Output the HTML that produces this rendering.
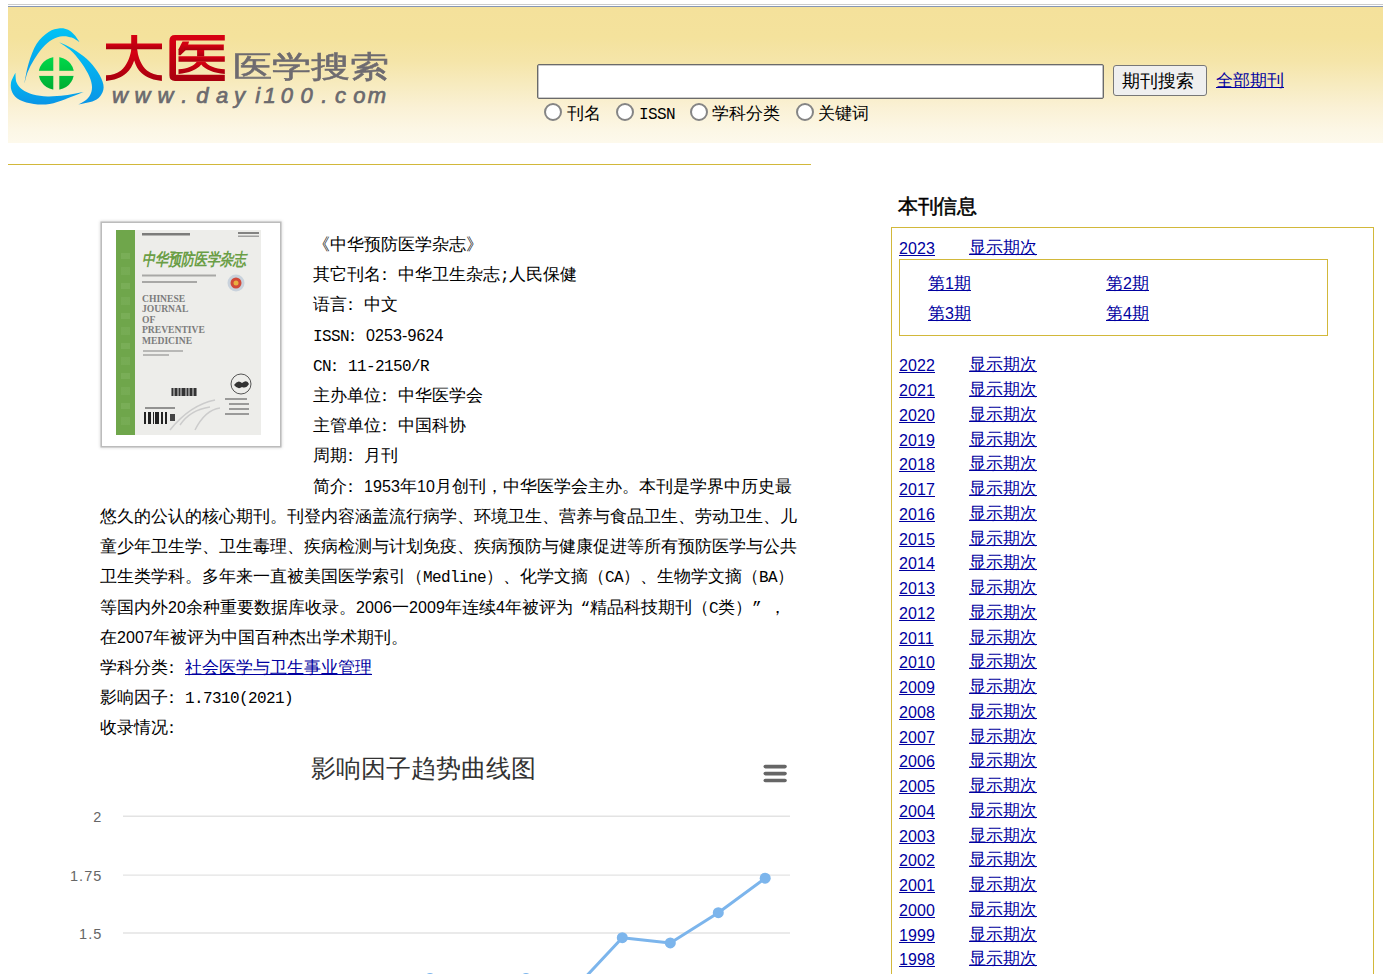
<!DOCTYPE html>
<html><head><meta charset="utf-8">
<style>
html,body{margin:0;padding:0;background:#fff}
body{width:1391px;height:974px;overflow:hidden;position:relative;font-family:"Liberation Mono",monospace;font-size:16px;color:#000}
.a{position:absolute;white-space:nowrap}
.t{font-size:17px;letter-spacing:0px;line-height:20px}
.l{font-size:16px;letter-spacing:-0.6px}
.d{font-family:"Liberation Sans",sans-serif;font-size:16px;letter-spacing:0.1px}
a{color:#0000a0;text-decoration:underline}
i{font-style:normal;display:inline-block;width:1em}
a i{text-decoration:underline}
i.c{text-indent:-.3em}
body.nocjk i{-webkit-text-fill-color:transparent;-webkit-text-stroke:0;position:relative}
body.nocjk i::before{content:"";position:absolute;left:.07em;top:.08em;width:.78em;height:.8em;box-sizing:border-box;border:.065em solid currentColor;opacity:.8}
body.nocjk i::after{content:"";position:absolute;left:.07em;top:.46em;width:.78em;height:.065em;background:currentColor;opacity:.8}
body.nocjk i.p::before{left:.1em;top:.7em;width:.16em;height:.16em;border:0;background:currentColor}
body.nocjk i.p::after{display:none}
body.nocjk a i{box-shadow:inset 0 -2px 0 #fff,inset 0 -3px 0 currentColor}

.fw{display:inline-block;width:17px;font-size:16px;letter-spacing:0}
.yr{position:absolute;white-space:nowrap;font-size:17px;letter-spacing:0px;line-height:20px}
</style></head><body>

<!-- HEADER -->
<div class="a" style="left:8px;top:4px;width:1375px;height:1px;background:#cbcbcb"></div>
<div class="a" style="left:8px;top:6px;width:1375px;height:1px;background:#8595b5"></div>
<div class="a" style="left:8px;top:7px;width:1375px;height:136px;background:linear-gradient(#f4e19b 0%,#f4e29c 22%,#f5e5a9 40%,#f7ebbf 57%,#faf1d5 74%,#fcf7e6 91%,#fdf9ec 100%)"></div>

<!-- logo -->
<svg class="a" style="left:0;top:0" width="400" height="145" viewBox="0 0 400 145">
<defs>
<linearGradient id="bl" x1="0" y1="0" x2="0" y2="1"><stop offset="0" stop-color="#00c3f5"/><stop offset="1" stop-color="#0a94e6"/></linearGradient>
<linearGradient id="gr" x1="0" y1="0" x2="0" y2="1"><stop offset="0" stop-color="#00d84a"/><stop offset="1" stop-color="#00ad32"/></linearGradient>
<linearGradient id="rd" x1="0" y1="0" x2="0" y2="1"><stop offset="0" stop-color="#d80012"/><stop offset="1" stop-color="#a8000e"/></linearGradient>
<mask id="cr"><rect x="0" y="0" width="400" height="145" fill="#fff"/><rect x="53.3" y="50" width="6" height="50" fill="#000"/><rect x="30" y="70.8" width="50" height="5.1" fill="#000"/></mask>
</defs>
<g fill="url(#bl)">
<path d="M24.2,84.2 C24.9,80.7 26.6,70.1 28.6,63.4 C30.7,56.7 33.2,49.2 36.5,44.0 C39.8,38.8 44.7,34.6 48.6,32.0 C52.5,29.4 56.5,28.7 59.8,28.3 C63.0,27.9 65.6,28.7 68.1,29.8 C70.5,30.9 72.6,32.9 74.5,35.0 C76.4,37.1 78.8,41.0 79.6,42.2 L79.6,42.2 C78.3,41.4 74.6,38.6 71.8,37.6 C69.0,36.6 65.7,35.9 62.5,36.2 C59.3,36.5 55.7,37.5 52.4,39.4 C49.1,41.3 45.7,44.3 42.6,47.7 C39.5,51.1 36.5,55.7 34.0,59.7 C31.5,63.7 29.4,67.7 27.8,71.8 C26.2,75.9 24.8,82.1 24.2,84.2Z"/>
<path d="M59.3,42.2 C61.5,43.3 68.2,45.9 72.7,48.7 C77.2,51.5 82.4,54.9 86.6,58.8 C90.8,62.6 94.8,67.5 97.6,71.8 C100.4,76.1 102.8,81.0 103.4,84.7 C104.1,88.4 103.1,91.5 101.5,94.2 C99.9,96.9 97.9,99.1 94.0,100.8 C90.1,102.5 80.8,104.0 78.2,104.6 L78.2,104.6 C79.6,103.8 84.5,101.4 86.6,99.5 C88.7,97.6 90.1,95.5 91.0,93.0 C91.9,90.5 92.3,87.9 91.8,84.7 C91.3,81.5 90.0,77.6 88.0,73.6 C86.0,69.6 82.7,64.5 79.8,60.7 C76.9,56.9 74.2,53.6 70.8,50.5 C67.4,47.4 61.2,43.6 59.3,42.2Z"/>
<path d="M15.4,72.7 C14.7,74.4 11.5,79.5 11.0,82.8 C10.5,86.1 10.8,89.5 12.3,92.4 C13.8,95.3 16.2,98.1 19.8,100.0 C23.4,101.9 28.9,103.3 33.9,104.0 C38.9,104.7 44.4,104.8 49.6,104.0 C54.8,103.2 59.6,101.2 65.3,99.2 C71.0,97.2 80.7,93.3 83.8,92.1 L83.8,92.1 C80.7,92.6 71.3,94.6 65.3,95.3 C59.3,96.0 53.1,96.5 47.7,96.4 C42.3,96.3 37.2,95.6 33.0,94.5 C28.8,93.4 24.9,91.6 22.2,89.6 C19.5,87.6 17.7,85.4 16.6,82.6 C15.5,79.8 15.6,74.3 15.4,72.7Z"/>
</g>
<ellipse cx="56.3" cy="73.3" rx="17.6" ry="16.4" fill="url(#gr)" mask="url(#cr)"/>
<g fill="url(#rd)">
<path d="M106.0,43.6 L162.0,43.6 L162.0,49.2 L106.0,49.2Z"/><path d="M131.2,35.0 L137.2,35.0 L137.2,56.0 L131.2,56.0Z"/><path d="M137.2,50.2 C138.5,58 141,65 147,70.5 C151,73.8 156,75 161.9,75.3 L161.9,80.9 C154,80.2 147,78 141.5,73 C138,69.8 135.6,65.5 134.2,60.5 C132.6,65.5 130,69.8 126.5,73 C121,78 114,80.2 106,80.9 L106,75.3 C112,75 117,73.8 121,70.5 C127,65 129.7,58 131.2,50.2Z"/>
<path d="M224.8,35.1 L175,35.1 Q169.4,35.1 169.4,40.7 L169.4,75.3 Q169.4,80.9 175,80.9 L224.8,80.9 L224.8,74.8 L176,74.8 L176,40.6 L224.8,40.6Z"/><path d="M182.5,41.6 L189.1,41.6 L186.6,49.2 L180.5,55.2 L178.5,55.2 L178.5,49.2Z"/><path d="M184.0,44.6 L223.8,44.6 L223.8,50.2 L184.0,50.2Z"/><path d="M197.1,50.0 L204.2,50.0 L204.2,56.5 L197.1,56.5Z"/><path d="M178.5,56.2 L224.8,56.2 L224.8,61.7 L178.5,61.7Z"/><path d="M197,61.5 C194,66 188,68.5 178.5,69.3 L178.5,74 C189,73 197,70 201.2,64.6 C205.5,70 213.5,73 224.8,74 L224.8,69.3 C215,68.5 208,66 205,61.5Z"/>
</g>
</svg>
<!-- /logo -->

<div class="a" style="left:233px;top:48.6px;font-size:32px;line-height:38px;letter-spacing:0px;color:#6e6b70;-webkit-text-stroke:0.6px #6e6b70;font-family:'Liberation Sans',sans-serif;transform-origin:0 0;transform:scale(1.215,0.93)"><i>医</i><i>学</i><i>搜</i><i>索</i></div>
<div style="position:absolute;left:0;top:0;font-family:'Liberation Sans',sans-serif;font-style:italic;font-size:22px;line-height:24px;color:#6b6a6e;-webkit-text-stroke:0.7px #6b6a6e"><span class="a" style="left:110.0px;top:83.5px;width:20px;text-align:center">w</span><span class="a" style="left:132.5px;top:83.5px;width:20px;text-align:center">w</span><span class="a" style="left:155.5px;top:83.5px;width:20px;text-align:center">w</span><span class="a" style="left:174.2px;top:83.5px;width:20px;text-align:center">.</span><span class="a" style="left:192.4px;top:83.5px;width:20px;text-align:center">d</span><span class="a" style="left:212.2px;top:83.5px;width:20px;text-align:center">a</span><span class="a" style="left:229.5px;top:83.5px;width:20px;text-align:center">y</span><span class="a" style="left:247.6px;top:83.5px;width:20px;text-align:center">i</span><span class="a" style="left:259.7px;top:83.5px;width:20px;text-align:center">1</span><span class="a" style="left:276.8px;top:83.5px;width:20px;text-align:center">0</span><span class="a" style="left:296.6px;top:83.5px;width:20px;text-align:center">0</span><span class="a" style="left:314.3px;top:83.5px;width:20px;text-align:center">.</span><span class="a" style="left:330.6px;top:83.5px;width:20px;text-align:center">c</span><span class="a" style="left:349.3px;top:83.5px;width:20px;text-align:center">o</span><span class="a" style="left:367.0px;top:83.5px;width:20px;text-align:center">m</span></div>
<!-- search -->
<div class="a" style="left:537px;top:64px;width:565px;height:33px;border:1px solid #6a6a6a;box-shadow:inset 0 0 0 0.6px #9a9a9a;border-radius:2px;background:#fff"></div>
<div class="a" style="left:1113px;top:65px;width:92px;height:29px;border:1px solid #777;border-radius:3px;background:#efefef"></div>
<div class="a" style="left:1122px;top:71px;font-size:18px;line-height:20px;font-family:'Liberation Sans',sans-serif"><i>期</i><i>刊</i><i>搜</i><i>索</i></div>
<div class="a t" style="left:1216px;top:72px"><a><i>全</i><i>部</i><i>期</i><i>刊</i></a></div>

<div class="a" style="left:544.3px;top:103px;width:14px;height:14px;border:2px solid #858585;border-radius:50%;background:#fff"></div><div class="a t" style="left:567px;top:105px"><i>刊</i><i>名</i></div><div class="a" style="left:615.8px;top:103px;width:14px;height:14px;border:2px solid #858585;border-radius:50%;background:#fff"></div><div class="a t" style="left:639px;top:105px"><span class="l">ISSN</span></div><div class="a" style="left:690.3px;top:103px;width:14px;height:14px;border:2px solid #858585;border-radius:50%;background:#fff"></div><div class="a t" style="left:712px;top:105px"><i>学</i><i>科</i><i>分</i><i>类</i></div><div class="a" style="left:796.3px;top:103px;width:14px;height:14px;border:2px solid #858585;border-radius:50%;background:#fff"></div><div class="a t" style="left:818px;top:105px"><i>关</i><i>键</i><i>词</i></div>

<!-- gold line -->
<div class="a" style="left:8px;top:164px;width:803px;height:1px;background:#d2b83a"></div>

<!-- cover -->
<div class="a" style="left:102px;top:223px;width:178px;height:223px;background:#fff;box-shadow:0 0 0 1.5px #bcbcbc, 0 0 3px 2px rgba(0,0,0,0.14)"></div>
<div class="a" style="left:116px;top:230px;width:145px;height:205px;background:#ededea"></div>
<div class="a" style="left:116px;top:230px;width:19px;height:205px;background:#6fa64b"></div>
<div class="a" style="left:121px;top:245px;width:9px;height:180px;background:repeating-linear-gradient(#6fa64b 0 8px,#7cb05a 8px 14px,#6fa64b 14px 22px,#78ad56 22px 30px);opacity:.8"></div>
<svg class="a" style="left:116px;top:230px" width="145" height="205" viewBox="116 230 145 205">
<g fill="#555"><rect x="142" y="233" width="48" height="2.5" opacity=".75"/><rect x="238" y="232" width="21" height="2" opacity=".7"/><rect x="238" y="235.5" width="21" height="1.5" opacity=".5"/>
<rect x="142" y="274.5" width="74" height="2" opacity=".45"/><rect x="142" y="281" width="55" height="2" opacity=".45"/>
<rect x="143" y="350" width="40" height="2" opacity=".35"/><rect x="143" y="354" width="26" height="2" opacity=".35"/>
<rect x="145" y="407" width="30" height="2" opacity=".6"/>
<rect x="225" y="398" width="22" height="2" opacity=".55"/><rect x="229" y="403" width="20" height="2" opacity=".55"/><rect x="229" y="408" width="20" height="2" opacity=".55"/><rect x="225" y="413" width="24" height="2" opacity=".55"/>
</g>
<text x="142" y="265" font-size="13" font-weight="bold" font-style="italic" fill="#6a9e45" font-family="Liberation Sans" letter-spacing="0" transform="translate(0,-79.5) scale(1,1.3)">中华预防医学杂志</text>
<g font-family="Liberation Serif" font-weight="bold" font-size="9.6" fill="#7c7c7c"><text x="142" y="301.8">CHINESE</text><text x="142" y="312.3">JOURNAL</text><text x="142" y="322.8">OF</text><text x="142" y="333.3">PREVENTIVE</text><text x="142" y="343.8">MEDICINE</text></g>
<circle cx="236" cy="283" r="8.5" fill="#c9d2dc"/><circle cx="236" cy="283" r="5.5" fill="#d14a3a"/><circle cx="236" cy="283" r="2.5" fill="#e8b040"/>
<circle cx="241" cy="384" r="10" fill="none" stroke="#555" stroke-width="1"/><path d="M234,385 q4,-6 8,-2 q5,-4 7,1 q-3,5 -7,3 q-4,3 -8,-2z" fill="#333"/>
<g fill="#333"><rect x="171" y="388" width="26" height="8" fill="#888"/><rect x="172" y="388" width="1" height="8"/><rect x="175" y="388" width="2" height="8"/><rect x="179" y="388" width="1" height="8"/><rect x="182" y="388" width="3" height="8"/><rect x="187" y="388" width="1" height="8"/><rect x="190" y="388" width="2" height="8"/><rect x="194" y="388" width="2" height="8"/></g>
<g fill="#222"><rect x="144" y="412" width="2" height="12"/><rect x="148" y="412" width="3" height="12"/><rect x="153" y="412" width="1" height="12"/><rect x="155" y="412" width="4" height="12"/><rect x="161" y="412" width="2" height="12"/><rect x="165" y="412" width="2" height="12"/><rect x="170" y="414" width="5" height="7" fill="#444"/></g>
<path d="M170,430 q20,-25 45,-30 M180,425 q10,-15 30,-18 M195,430 q10,-20 25,-22" stroke="#ccc" stroke-width="1.5" fill="none"/>
</svg>
<!-- left text -->
<div class="a t" style="left:313px;top:235.75px"><i class="p">《</i><i>中</i><i>华</i><i>预</i><i>防</i><i>医</i><i>学</i><i>杂</i><i>志</i><i class="p">》</i></div>
<div class="a t" style="left:313px;top:265.95px"><i>其</i><i>它</i><i>刊</i><i>名</i><i class="p c">：</i><i>中</i><i>华</i><i>卫</i><i>生</i><i>杂</i><i>志</i><span class="l">;</span><i>人</i><i>民</i><i>保</i><i>健</i></div>
<div class="a t" style="left:313px;top:296.15px"><i>语</i><i>言</i><i class="p c">：</i><i>中</i><i>文</i></div>
<div class="a t" style="left:313px;top:326.35px"><span class="l">ISSN</span><i class="p c">：</i><span class="d">0253-9624</span></div>
<div class="a t" style="left:313px;top:356.55px"><span class="l">CN</span><i class="p c">：</i><span class="l">11-2150/R</span></div>
<div class="a t" style="left:313px;top:386.75px"><i>主</i><i>办</i><i>单</i><i>位</i><i class="p c">：</i><i>中</i><i>华</i><i>医</i><i>学</i><i>会</i></div>
<div class="a t" style="left:313px;top:416.95px"><i>主</i><i>管</i><i>单</i><i>位</i><i class="p c">：</i><i>中</i><i>国</i><i>科</i><i>协</i></div>
<div class="a t" style="left:313px;top:447.15px"><i>周</i><i>期</i><i class="p c">：</i><i>月</i><i>刊</i></div>
<div class="a t" style="left:313px;top:477.35px"><i>简</i><i>介</i><i class="p c">：</i><span class="d">1953</span><i>年</i><span class="d">10</span><i>月</i><i>创</i><i>刊</i><i class="p">，</i><i>中</i><i>华</i><i>医</i><i>学</i><i>会</i><i>主</i><i>办</i><i class="p">。</i><i>本</i><i>刊</i><i>是</i><i>学</i><i>界</i><i>中</i><i>历</i><i>史</i><i>最</i></div>
<div class="a t" style="left:100px;top:507.55px"><i>悠</i><i>久</i><i>的</i><i>公</i><i>认</i><i>的</i><i>核</i><i>心</i><i>期</i><i>刊</i><i class="p">。</i><i>刊</i><i>登</i><i>内</i><i>容</i><i>涵</i><i>盖</i><i>流</i><i>行</i><i>病</i><i>学</i><i class="p">、</i><i>环</i><i>境</i><i>卫</i><i>生</i><i class="p">、</i><i>营</i><i>养</i><i>与</i><i>食</i><i>品</i><i>卫</i><i>生</i><i class="p">、</i><i>劳</i><i>动</i><i>卫</i><i>生</i><i class="p">、</i><i>儿</i></div>
<div class="a t" style="left:100px;top:537.75px"><i>童</i><i>少</i><i>年</i><i>卫</i><i>生</i><i>学</i><i class="p">、</i><i>卫</i><i>生</i><i>毒</i><i>理</i><i class="p">、</i><i>疾</i><i>病</i><i>检</i><i>测</i><i>与</i><i>计</i><i>划</i><i>免</i><i>疫</i><i class="p">、</i><i>疾</i><i>病</i><i>预</i><i>防</i><i>与</i><i>健</i><i>康</i><i>促</i><i>进</i><i>等</i><i>所</i><i>有</i><i>预</i><i>防</i><i>医</i><i>学</i><i>与</i><i>公</i><i>共</i></div>
<div class="a t" style="left:100px;top:567.95px"><i>卫</i><i>生</i><i>类</i><i>学</i><i>科</i><i class="p">。</i><i>多</i><i>年</i><i>来</i><i>一</i><i>直</i><i>被</i><i>美</i><i>国</i><i>医</i><i>学</i><i>索</i><i>引</i><i class="p">（</i><span class="l">Medline</span><i class="p">）</i><i class="p">、</i><i>化</i><i>学</i><i>文</i><i>摘</i><i class="p">（</i><span class="l">CA</span><i class="p">）</i><i class="p">、</i><i>生</i><i>物</i><i>学</i><i>文</i><i>摘</i><i class="p">（</i><span class="l">BA</span><i class="p">）</i></div>
<div class="a t" style="left:100px;top:598.15px"><i>等</i><i>国</i><i>内</i><i>外</i><span class="d">20</span><i>余</i><i>种</i><i>重</i><i>要</i><i>数</i><i>据</i><i>库</i><i>收</i><i>录</i><i class="p">。</i><span class="d">2006</span><i>一</i><span class="d">2009</span><i>年</i><i>连</i><i>续</i><span class="d">4</span><i>年</i><i>被</i><i>评</i><i>为</i><span class="fw" style="text-align:right">“</span><i>精</i><i>品</i><i>科</i><i>技</i><i>期</i><i>刊</i><i class="p">（</i><span class="l">C</span><i>类</i><i class="p">）</i><span class="fw">”</span><i class="p">，</i></div>
<div class="a t" style="left:100px;top:628.35px"><i>在</i><span class="d">2007</span><i>年</i><i>被</i><i>评</i><i>为</i><i>中</i><i>国</i><i>百</i><i>种</i><i>杰</i><i>出</i><i>学</i><i>术</i><i>期</i><i>刊</i><i class="p">。</i></div>
<div class="a t" style="left:100px;top:658.55px"><i>学</i><i>科</i><i>分</i><i>类</i><i class="p c">：</i><a><i>社</i><i>会</i><i>医</i><i>学</i><i>与</i><i>卫</i><i>生</i><i>事</i><i>业</i><i>管</i><i>理</i></a></div>
<div class="a t" style="left:100px;top:688.75px"><i>影</i><i>响</i><i>因</i><i>子</i><i class="p c">：</i><span class="l">1.7310(2021)</span></div>
<div class="a t" style="left:100px;top:718.95px"><i>收</i><i>录</i><i>情</i><i>况</i><i class="p c">：</i></div>
<!-- /left text -->
<!-- chart -->
<svg class="a" style="left:0;top:740px" width="800" height="234" viewBox="0 740 800 234">
<g stroke="#e3e3e3" stroke-width="1.4">
<line x1="123" y1="816.3" x2="790" y2="816.3"/><line x1="123" y1="875.1" x2="790" y2="875.1"/><line x1="123" y1="933" x2="790" y2="933"/>
</g>
<polyline points="430,978.5 478,1000 526,978.5 574,989.4 622.3,937.7 670.3,942.9 718.3,912.7 765.2,878.2" fill="none" stroke="#7cb5ec" stroke-width="3" stroke-linejoin="round" stroke-linecap="round"/>
<circle cx="430" cy="978.5" r="5.5" fill="#7cb5ec"/><circle cx="478" cy="1000" r="5.5" fill="#7cb5ec"/><circle cx="526" cy="978.5" r="5.5" fill="#7cb5ec"/><circle cx="574" cy="989.4" r="5.5" fill="#7cb5ec"/><circle cx="622.3" cy="937.7" r="5.5" fill="#7cb5ec"/><circle cx="670.3" cy="942.9" r="5.5" fill="#7cb5ec"/><circle cx="718.3" cy="912.7" r="5.5" fill="#7cb5ec"/><circle cx="765.2" cy="878.2" r="5.5" fill="#7cb5ec"/>
<g stroke="#666" stroke-width="3.6" stroke-linecap="round">
<line x1="765.3" y1="766.6" x2="785" y2="766.6"/><line x1="765.3" y1="773.6" x2="785" y2="773.6"/><line x1="765.3" y1="780.5" x2="785" y2="780.5"/>
</g>
</svg>
<div class="a" style="left:0;top:807px;width:102.5px;text-align:right;font-family:'Liberation Sans',sans-serif;font-size:14.5px;letter-spacing:1.1px;line-height:20px;color:#666">2</div>
<div class="a" style="left:0;top:866px;width:102.5px;text-align:right;font-family:'Liberation Sans',sans-serif;font-size:14.5px;letter-spacing:1.1px;line-height:20px;color:#666">1.75</div>
<div class="a" style="left:0;top:924px;width:102.5px;text-align:right;font-family:'Liberation Sans',sans-serif;font-size:14.5px;letter-spacing:1.1px;line-height:20px;color:#666">1.5</div>
<div class="a" style="left:311px;top:753px;font-family:'Liberation Sans',sans-serif;font-size:25px;line-height:30px;color:#333"><i>影</i><i>响</i><i>因</i><i>子</i><i>趋</i><i>势</i><i>曲</i><i>线</i><i>图</i></div>
<!-- /chart -->
<!-- right panel -->
<div class="a" style="left:898px;top:197px;font-size:19.5px;letter-spacing:0px;-webkit-text-stroke:0.5px #000;line-height:22px"><i>本</i><i>刊</i><i>信</i><i>息</i></div>
<div class="a" style="left:891px;top:227px;width:481px;height:760px;border:1px solid #d2b83a"></div>
<div class="a" style="left:899px;top:259px;width:427px;height:75px;border:1px solid #d2b83a"></div>
<div class="yr" style="left:899px;top:239.10px"><a><span class="d">2023</span></a></div><div class="yr" style="left:969px;top:239.10px"><a><i>显</i><i>示</i><i>期</i><i>次</i></a></div>
<div class="yr" style="left:928px;top:274.30px"><a><i>第</i><span class="d">1</span><i>期</i></a></div><div class="yr" style="left:1106px;top:274.30px"><a><i>第</i><span class="d">2</span><i>期</i></a></div>
<div class="yr" style="left:928px;top:304.30px"><a><i>第</i><span class="d">3</span><i>期</i></a></div><div class="yr" style="left:1106px;top:304.30px"><a><i>第</i><span class="d">4</span><i>期</i></a></div>
<div class="yr" style="left:899px;top:356.30px"><a><span class="d">2022</span></a></div><div class="yr" style="left:969px;top:356.30px"><a><i>显</i><i>示</i><i>期</i><i>次</i></a></div>
<div class="yr" style="left:899px;top:381.05px"><a><span class="d">2021</span></a></div><div class="yr" style="left:969px;top:381.05px"><a><i>显</i><i>示</i><i>期</i><i>次</i></a></div>
<div class="yr" style="left:899px;top:405.80px"><a><span class="d">2020</span></a></div><div class="yr" style="left:969px;top:405.80px"><a><i>显</i><i>示</i><i>期</i><i>次</i></a></div>
<div class="yr" style="left:899px;top:430.55px"><a><span class="d">2019</span></a></div><div class="yr" style="left:969px;top:430.55px"><a><i>显</i><i>示</i><i>期</i><i>次</i></a></div>
<div class="yr" style="left:899px;top:455.30px"><a><span class="d">2018</span></a></div><div class="yr" style="left:969px;top:455.30px"><a><i>显</i><i>示</i><i>期</i><i>次</i></a></div>
<div class="yr" style="left:899px;top:480.05px"><a><span class="d">2017</span></a></div><div class="yr" style="left:969px;top:480.05px"><a><i>显</i><i>示</i><i>期</i><i>次</i></a></div>
<div class="yr" style="left:899px;top:504.80px"><a><span class="d">2016</span></a></div><div class="yr" style="left:969px;top:504.80px"><a><i>显</i><i>示</i><i>期</i><i>次</i></a></div>
<div class="yr" style="left:899px;top:529.55px"><a><span class="d">2015</span></a></div><div class="yr" style="left:969px;top:529.55px"><a><i>显</i><i>示</i><i>期</i><i>次</i></a></div>
<div class="yr" style="left:899px;top:554.30px"><a><span class="d">2014</span></a></div><div class="yr" style="left:969px;top:554.30px"><a><i>显</i><i>示</i><i>期</i><i>次</i></a></div>
<div class="yr" style="left:899px;top:579.05px"><a><span class="d">2013</span></a></div><div class="yr" style="left:969px;top:579.05px"><a><i>显</i><i>示</i><i>期</i><i>次</i></a></div>
<div class="yr" style="left:899px;top:603.80px"><a><span class="d">2012</span></a></div><div class="yr" style="left:969px;top:603.80px"><a><i>显</i><i>示</i><i>期</i><i>次</i></a></div>
<div class="yr" style="left:899px;top:628.55px"><a><span class="d">2011</span></a></div><div class="yr" style="left:969px;top:628.55px"><a><i>显</i><i>示</i><i>期</i><i>次</i></a></div>
<div class="yr" style="left:899px;top:653.30px"><a><span class="d">2010</span></a></div><div class="yr" style="left:969px;top:653.30px"><a><i>显</i><i>示</i><i>期</i><i>次</i></a></div>
<div class="yr" style="left:899px;top:678.05px"><a><span class="d">2009</span></a></div><div class="yr" style="left:969px;top:678.05px"><a><i>显</i><i>示</i><i>期</i><i>次</i></a></div>
<div class="yr" style="left:899px;top:702.80px"><a><span class="d">2008</span></a></div><div class="yr" style="left:969px;top:702.80px"><a><i>显</i><i>示</i><i>期</i><i>次</i></a></div>
<div class="yr" style="left:899px;top:727.55px"><a><span class="d">2007</span></a></div><div class="yr" style="left:969px;top:727.55px"><a><i>显</i><i>示</i><i>期</i><i>次</i></a></div>
<div class="yr" style="left:899px;top:752.30px"><a><span class="d">2006</span></a></div><div class="yr" style="left:969px;top:752.30px"><a><i>显</i><i>示</i><i>期</i><i>次</i></a></div>
<div class="yr" style="left:899px;top:777.05px"><a><span class="d">2005</span></a></div><div class="yr" style="left:969px;top:777.05px"><a><i>显</i><i>示</i><i>期</i><i>次</i></a></div>
<div class="yr" style="left:899px;top:801.80px"><a><span class="d">2004</span></a></div><div class="yr" style="left:969px;top:801.80px"><a><i>显</i><i>示</i><i>期</i><i>次</i></a></div>
<div class="yr" style="left:899px;top:826.55px"><a><span class="d">2003</span></a></div><div class="yr" style="left:969px;top:826.55px"><a><i>显</i><i>示</i><i>期</i><i>次</i></a></div>
<div class="yr" style="left:899px;top:851.30px"><a><span class="d">2002</span></a></div><div class="yr" style="left:969px;top:851.30px"><a><i>显</i><i>示</i><i>期</i><i>次</i></a></div>
<div class="yr" style="left:899px;top:876.05px"><a><span class="d">2001</span></a></div><div class="yr" style="left:969px;top:876.05px"><a><i>显</i><i>示</i><i>期</i><i>次</i></a></div>
<div class="yr" style="left:899px;top:900.80px"><a><span class="d">2000</span></a></div><div class="yr" style="left:969px;top:900.80px"><a><i>显</i><i>示</i><i>期</i><i>次</i></a></div>
<div class="yr" style="left:899px;top:925.55px"><a><span class="d">1999</span></a></div><div class="yr" style="left:969px;top:925.55px"><a><i>显</i><i>示</i><i>期</i><i>次</i></a></div>
<div class="yr" style="left:899px;top:950.30px"><a><span class="d">1998</span></a></div><div class="yr" style="left:969px;top:950.30px"><a><i>显</i><i>示</i><i>期</i><i>次</i></a></div>
<!-- /right panel -->
<script>
(function(){try{var s=document.createElement('span');s.style.cssText='position:absolute;left:-9999px;top:0;font:100px "Liberation Mono",monospace;white-space:nowrap;letter-spacing:0';s.textContent='\u4e2d\u6587\u4e2d\u6587\u4e2d\u6587\u4e2d\u6587\u4e2d\u6587';document.body.appendChild(s);var w=s.getBoundingClientRect().width;document.body.removeChild(s);if(w<900)document.body.className+=' nocjk';}catch(e){}})();
</script>
</body></html>
